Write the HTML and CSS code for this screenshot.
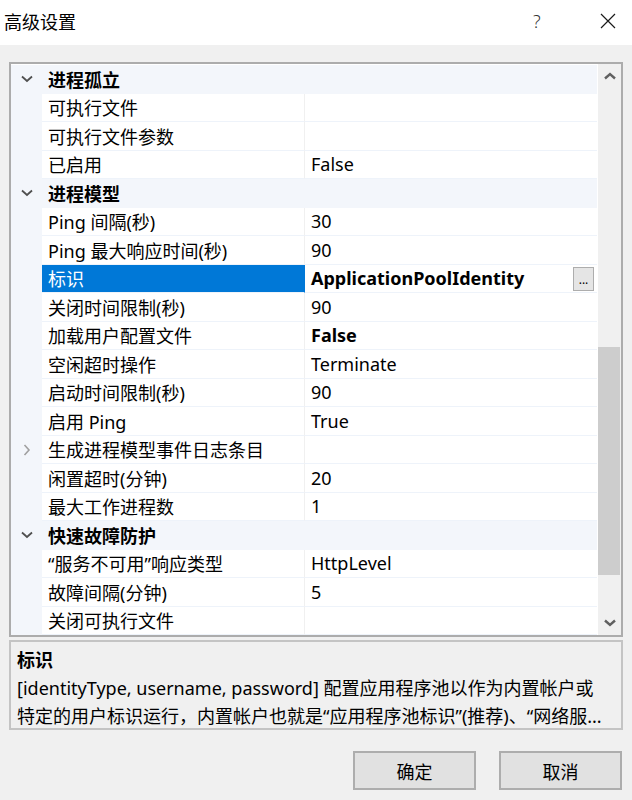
FILE: index.html
```html
<!DOCTYPE html>
<html lang="zh-CN">
<head>
<meta charset="utf-8">
<title>高级设置</title>
<link rel="stylesheet" href="styles.css">
</head>
<body>
<div class="window">
  <div class="titlebar">
    <span class="title">高级设置</span>
    <span class="help">?</span>
    <span class="close">
      <svg width="16" height="16" viewBox="0 0 16 16"><path d="M1 1 L15 15 M15 1 L1 15" stroke="#1a1a1a" stroke-width="1.2" fill="none"/></svg>
    </span>
  </div>
  <div class="content">
    <div class="grid">
      <div class="rows">
        <div class="row cat"><span class="gut"><svg class="chev" width="12" height="8" viewBox="0 0 12 8"><path d="M1 1.5 L6 6 L11 1.5" stroke="#505050" stroke-width="1.8" fill="none"/></svg></span><span class="cname">进程孤立</span></div>
        <div class="row"><span class="gut"></span><span class="name">可执行文件</span><span class="val"></span></div>
        <div class="row"><span class="gut"></span><span class="name">可执行文件参数</span><span class="val"></span></div>
        <div class="row"><span class="gut"></span><span class="name">已启用</span><span class="val">False</span></div>
        <div class="row cat"><span class="gut"><svg class="chev" width="12" height="8" viewBox="0 0 12 8"><path d="M1 1.5 L6 6 L11 1.5" stroke="#505050" stroke-width="1.8" fill="none"/></svg></span><span class="cname">进程模型</span></div>
        <div class="row"><span class="gut"></span><span class="name">Ping 间隔(秒)</span><span class="val">30</span></div>
        <div class="row"><span class="gut"></span><span class="name">Ping 最大响应时间(秒)</span><span class="val">90</span></div>
        <div class="row sel"><span class="gut"></span><span class="name">标识</span><span class="val bold">ApplicationPoolIdentity<span class="dots">...</span></span></div>
        <div class="row"><span class="gut"></span><span class="name">关闭时间限制(秒)</span><span class="val">90</span></div>
        <div class="row"><span class="gut"></span><span class="name">加载用户配置文件</span><span class="val bold">False</span></div>
        <div class="row"><span class="gut"></span><span class="name">空闲超时操作</span><span class="val">Terminate</span></div>
        <div class="row"><span class="gut"></span><span class="name">启动时间限制(秒)</span><span class="val">90</span></div>
        <div class="row"><span class="gut"></span><span class="name">启用 Ping</span><span class="val">True</span></div>
        <div class="row"><span class="gut"><svg class="chev" width="8" height="12" viewBox="0 0 8 12"><path d="M1.5 1 L6 6 L1.5 11" stroke="#a0a0a0" stroke-width="1.6" fill="none"/></svg></span><span class="name">生成进程模型事件日志条目</span><span class="val"></span></div>
        <div class="row"><span class="gut"></span><span class="name">闲置超时(分钟)</span><span class="val">20</span></div>
        <div class="row"><span class="gut"></span><span class="name">最大工作进程数</span><span class="val">1</span></div>
        <div class="row cat"><span class="gut"><svg class="chev" width="12" height="8" viewBox="0 0 12 8"><path d="M1 1.5 L6 6 L11 1.5" stroke="#505050" stroke-width="1.8" fill="none"/></svg></span><span class="cname">快速故障防护</span></div>
        <div class="row"><span class="gut"></span><span class="name">“服务不可用”响应类型</span><span class="val">HttpLevel</span></div>
        <div class="row"><span class="gut"></span><span class="name">故障间隔(分钟)</span><span class="val">5</span></div>
        <div class="row"><span class="gut"></span><span class="name">关闭可执行文件</span><span class="val"></span></div>
      </div>
      <div class="scrollbar">
        <div class="arrow"><svg width="12" height="8" viewBox="0 0 12 8"><path d="M1 6.5 L6 2 L11 6.5" stroke="#606060" stroke-width="2.4" fill="none"/></svg></div>
        <div class="track"><div class="thumb"></div></div>
        <div class="arrow"><svg width="12" height="8" viewBox="0 0 12 8"><path d="M1 1.5 L6 6 L11 1.5" stroke="#606060" stroke-width="2.4" fill="none"/></svg></div>
      </div>
    </div>
    <div class="desc">
      <div class="desc-title">标识</div>
      <div class="desc-line">[identityType, username, password] 配置应用程序池以作为内置帐户或</div>
      <div class="desc-line">特定的用户标识运行，内置帐户也就是“应用程序池标识”(推荐)、“网络服...</div>
    </div>
    <div class="buttons">
      <button class="btn">确定</button>
      <button class="btn">取消</button>
    </div>
  </div>
</div>
</body>
</html>
```

FILE: styles.css
```css
html, body {
  margin: 0;
  padding: 0;
}
body {
  background: #f0f0f0;
  font-family: "Noto Sans", "Noto Sans CJK SC", sans-serif;
  font-size: 18px;
  color: #000;
}
.window {
  width: 632px;
  height: 800px;
  display: flex;
  flex-direction: column;
}
.titlebar {
  height: 45px;
  background: #fff;
  display: flex;
  align-items: center;
  padding-left: 4px;
}
.title {
  font-size: 18px;
  flex: 1;
  padding-bottom: 4px;
}
.help {
  font-size: 18px;
  width: 20px;
  margin-right: 47px;
  color: #333;
  padding-bottom: 4px;
  font-weight: 300;
}
.close {
  width: 16px;
  height: 16px;
  margin-right: 16px;
  margin-bottom: 4px;
  display: flex;
}
.content {
  padding: 17px 9px 0 9px;
  display: flex;
  flex-direction: column;
}
.grid {
  height: 571px;
  border: 2px solid #acacac;
  background: #fff;
  display: flex;
}
.rows {
  flex: 1;
  padding-top: 1px;
  overflow: hidden;
}
.row {
  height: 28.5px;
  display: flex;
  align-items: stretch;
  box-sizing: border-box;
}
.gut {
  width: 31px;
  flex: none;
  background: #f3f6fb;
  display: flex;
  align-items: center;
  justify-content: center;
}
.row .name {
  width: 256px;
  flex: none;
  padding-left: 6px;
  display: flex;
  align-items: center;
  border-right: 1px solid #f0f0f0;
  border-bottom: 1px solid #eef3fa;
  white-space: nowrap;
}
.row .val {
  flex: 1;
  padding-left: 6px;
  display: flex;
  align-items: center;
  border-bottom: 1px solid #eef3fa;
  white-space: nowrap;
  position: relative;
}
.bold {
  font-weight: 700;
}
.row.cat {
  background: #f3f6fb;
}
.cname {
  flex: 1;
  padding-left: 6px;
  font-weight: 700;
  display: flex;
  align-items: center;
}
.row.sel .name {
  background: #0078d7;
  color: #fff;
  border-right-color: #0078d7;
}
.dots {
  position: absolute;
  right: 3px;
  top: 2px;
  width: 21px;
  height: 24px;
  background: #e5e5e5;
  border: 1px solid #adadad;
  font-weight: 400;
  font-size: 12px;
  display: flex;
  align-items: flex-end;
  justify-content: center;
  line-height: 14px;
  padding-bottom: 3px;
  box-sizing: border-box;
}
.scrollbar {
  width: 23px;
  flex: none;
  background: #f0f0f0;
  display: flex;
  flex-direction: column;
  border-left: 1px solid #fff;
}
.arrow {
  height: 24px;
  display: flex;
  align-items: center;
  justify-content: center;
  flex: none;
}
.track {
  flex: 1;
  position: relative;
}
.thumb {
  position: absolute;
  left: 0;
  right: 1px;
  top: 259px;
  height: 228px;
  background: #cdcdcd;
}
.desc {
  margin-top: 3px;
  height: 90px;
  box-sizing: border-box;
  border: 2px solid #c4c4c4;
  padding: 4px 6px 0 6px;
}
.desc-title {
  font-weight: 700;
  height: 28px;
  line-height: 28px;
}
.desc-line {
  height: 28px;
  line-height: 28px;
  white-space: nowrap;
  overflow: hidden;
}
.buttons {
  display: flex;
  justify-content: flex-end;
  gap: 23px;
  margin-top: 21px;
  padding-right: 1px;
}
.btn {
  width: 123px;
  height: 39px;
  background: #e1e1e1;
  border: 2px solid #adadad;
  font-family: "Noto Sans", "Noto Sans CJK SC", sans-serif;
  font-size: 18px;
  color: #000;
  padding: 0;
}
```
